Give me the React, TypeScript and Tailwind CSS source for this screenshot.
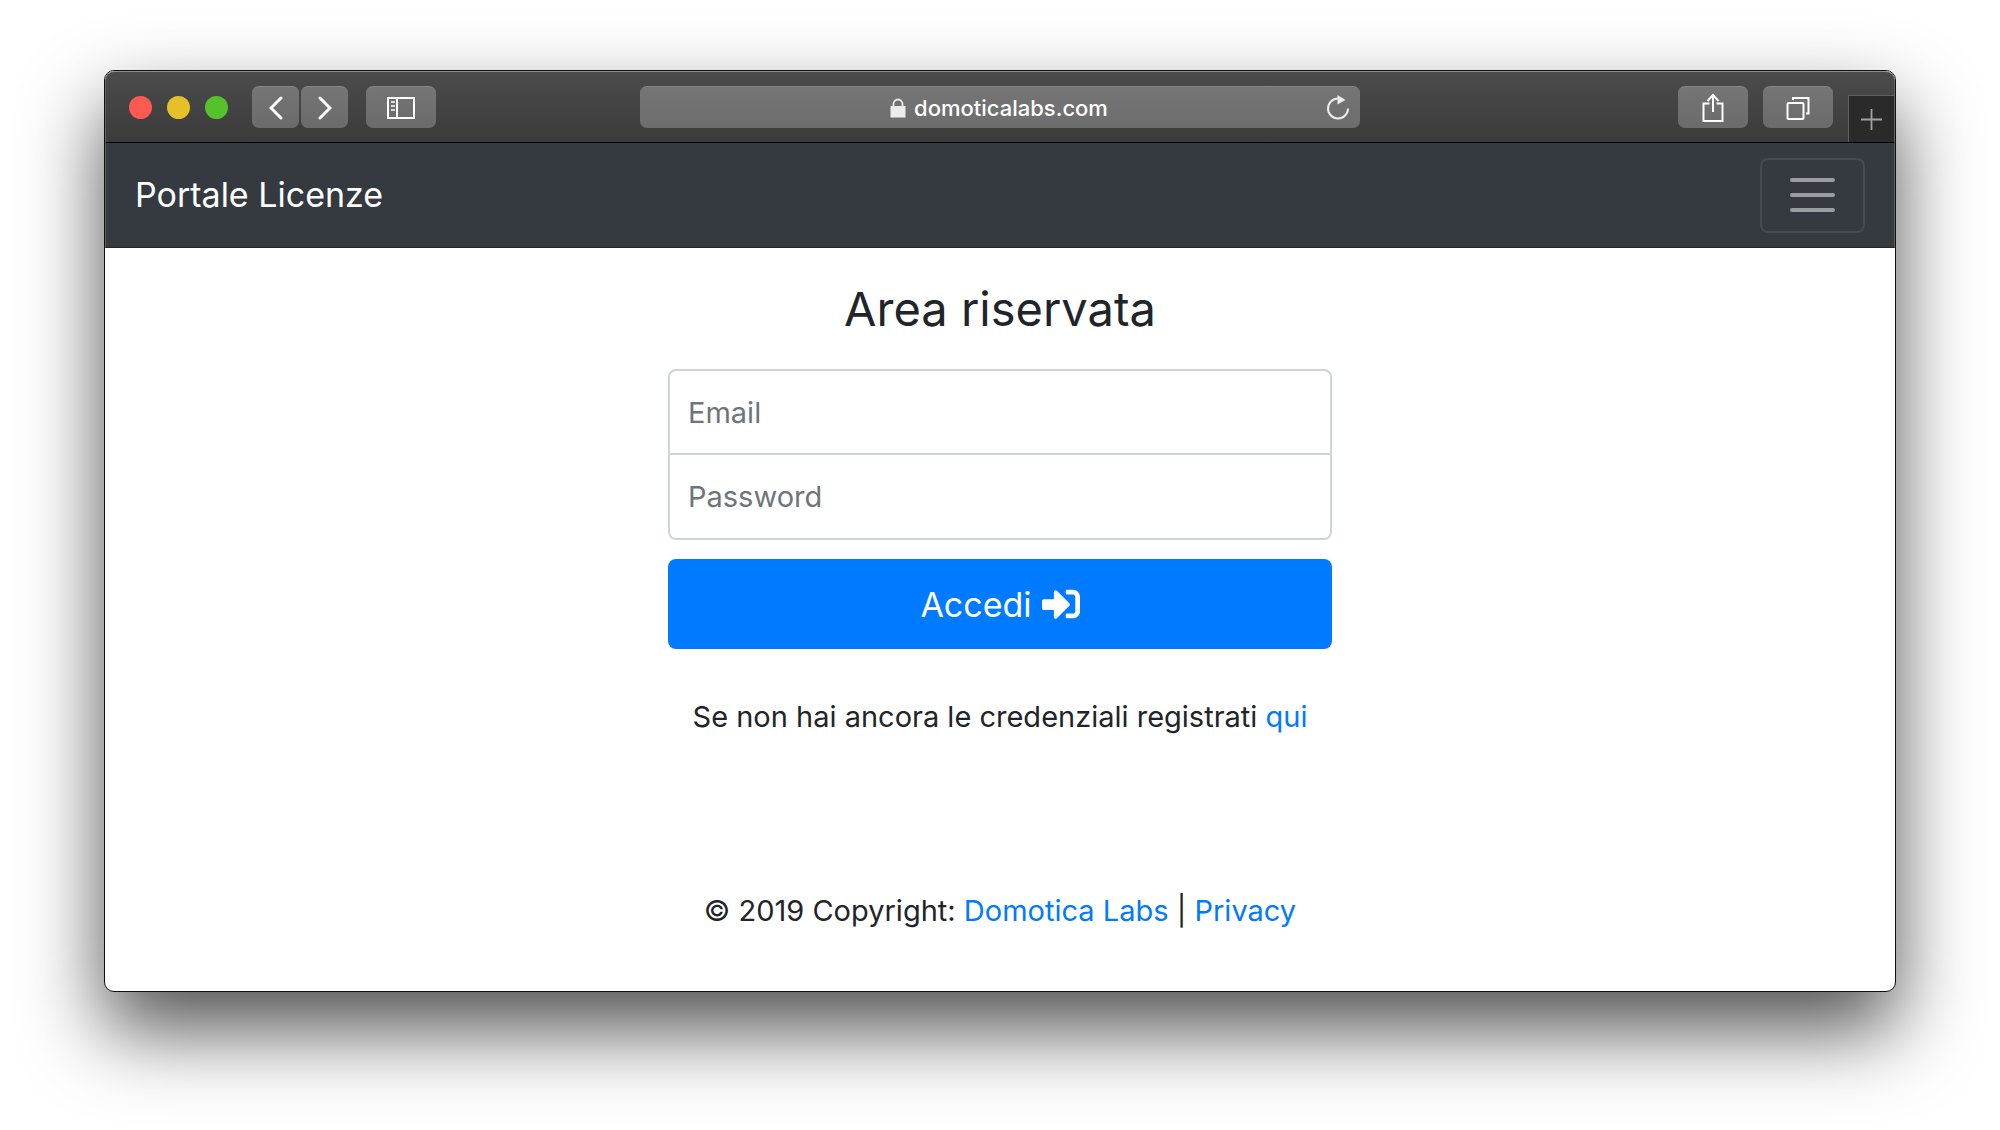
import { useState } from 'react';
import { FaSignInAlt } from 'react-icons/fa';

const toolButton =
  'flex h-[42px] items-center justify-center rounded-[7px] border-t border-[#868686] bg-linear-to-b from-[#757575] to-[#6b6b6b] text-white';

function BrowserBar() {
  return (
    <div className="flex h-[72px] rounded-t-[9px] border-x border-t border-b border-x-[#666] border-t-[#8c8c8c] border-b-black bg-linear-to-b from-[#4b4b4b] to-[#3b3b3b]">
      <div className="flex flex-1 items-center">
        <div className="ml-[23px] flex gap-[15px]">
          <span className="size-[23px] rounded-full bg-[#ff5a52]" />
          <span className="size-[23px] rounded-full bg-[#e6c029]" />
          <span className="size-[23px] rounded-full bg-[#53c22b]" />
        </div>
        <div className="ml-6 flex gap-[2px]">
          <button type="button" aria-label="Indietro" className={`${toolButton} w-[47px]`}>
            <svg width="14" height="24" viewBox="0 0 14 24" fill="none" stroke="currentColor" strokeWidth="3" strokeLinecap="round">
              <path d="M12 2L2 12l10 10" />
            </svg>
          </button>
          <button type="button" aria-label="Avanti" className={`${toolButton} w-[47px]`}>
            <svg width="14" height="24" viewBox="0 0 14 24" fill="none" stroke="currentColor" strokeWidth="3" strokeLinecap="round">
              <path d="M2 2l10 10L2 22" />
            </svg>
          </button>
        </div>
        <button type="button" aria-label="Barra laterale" className={`${toolButton} ml-[18px] w-[70px]`}>
          <svg width="30" height="24" viewBox="0 0 30 24" fill="none" stroke="currentColor">
            <rect x="2" y="2" width="26" height="20" strokeWidth="2" />
            <path d="M11 2v20" strokeWidth="2" />
            <path d="M5 6h4M5 10h4M5 14h4" strokeWidth="1.5" />
          </svg>
        </button>
      </div>

      <div className="my-auto flex h-[42px] w-[40.3%] items-center rounded-[7px] border-t border-[#868686] bg-linear-to-b from-[#757575] to-[#6d6d6d] px-[11px] text-white">
        <div className="flex flex-1 items-center justify-center gap-2 pl-5">
          <svg width="16" height="20" viewBox="0 0 16 20" fill="none">
            <path d="M3.5 9V6a4.5 4.5 0 0 1 9 0v3" stroke="#ececec" strokeWidth="1.8" />
            <rect x="0.5" y="8" width="15" height="11.5" rx="0.5" fill="#ececec" />
          </svg>
          <span className="text-[22px] leading-7 font-medium">domoticalabs.com</span>
        </div>
        <button type="button" aria-label="Ricarica" className="text-[#ececec]">
          <svg width="22" height="26" viewBox="0 0 22 26" fill="none">
            <path d="M21 13.5a10 10 0 1 1-10-10" stroke="currentColor" strokeWidth="2" />
            <path d="M10.5 0v9.5l8-4.5z" fill="currentColor" />
          </svg>
        </button>
      </div>

      <div className="flex flex-1 items-center justify-end">
        <button type="button" aria-label="Condividi" className={`${toolButton} w-[70px]`}>
          <svg width="22" height="30" viewBox="0 0 22 30" fill="none" stroke="currentColor" strokeWidth="2">
            <path d="M7.5 10.5H1.5v17.5h19V10.5h-6M11 2v17M5.5 8L11 2l5.5 6" />
          </svg>
        </button>
        <button type="button" aria-label="Pannelli" className={`${toolButton} mr-[15px] ml-[15px] w-[70px]`}>
          <svg width="24" height="24" viewBox="0 0 24 24" fill="none" stroke="currentColor" strokeWidth="2">
            <rect x="1.5" y="7" width="16" height="16" rx="1" />
            <path d="M7 4V2h15.5v15.5h-2.5" />
          </svg>
        </button>
        <button
          type="button"
          aria-label="Nuovo pannello"
          className="flex h-[47px] w-[46px] items-center justify-center self-end border-t border-l border-[#606060] bg-[#2a2a2a] text-[#a3a3a3]"
        >
          <svg width="21" height="21" viewBox="0 0 21 21" fill="none" stroke="currentColor" strokeWidth="1.8">
            <path d="M10.5 0v21M0 10.5h21" />
          </svg>
        </button>
      </div>
    </div>
  );
}

export default function App() {
  const [email, setEmail] = useState('');
  const [password, setPassword] = useState('');

  return (
    <div className="min-h-screen bg-white px-[104px] pt-[70px] pb-[138px] font-['Inter',sans-serif] text-[#212529]">
      <div className="overflow-hidden rounded-[10px] border border-[#111] bg-white shadow-[0_38px_80px_rgba(0,0,0,0.68)]">
        <BrowserBar />

        <nav className="flex h-[105px] items-center justify-between border-x border-b border-x-[#5c6166] border-b-[#22272b] bg-[#343a40] px-[29px]">
          <a href="#" className="text-[34px] leading-[42px] text-white">Portale Licenze</a>
          <button
            type="button"
            aria-label="Menu"
            className="flex h-[75px] w-[105px] flex-col items-center justify-center gap-[11px] rounded-lg border-2 border-[#464b51]"
          >
            <span className="h-1 w-[45px] rounded-full bg-[#9a9da0]" />
            <span className="h-1 w-[45px] rounded-full bg-[#9a9da0]" />
            <span className="h-1 w-[45px] rounded-full bg-[#9a9da0]" />
          </button>
        </nav>

        <main className="mx-auto w-[664px] pt-[30px] text-center">
          <h1 className="text-[47px] leading-[62px]">Area riservata</h1>
          <form className="mt-[29px]" onSubmit={(e) => e.preventDefault()}>
            <input
              type="email"
              aria-label="Email"
              placeholder="Email"
              value={email}
              onChange={(e) => setEmail(e.target.value)}
              className="block h-[86px] w-full rounded-t-lg border-2 border-[#ced4da] px-[18px] text-[29px] placeholder:text-[#6c757d]"
            />
            <input
              type="password"
              aria-label="Password"
              placeholder="Password"
              value={password}
              onChange={(e) => setPassword(e.target.value)}
              className="block h-[85px] w-full rounded-b-lg border-2 border-t-0 border-[#ced4da] px-[18px] text-[29px] placeholder:text-[#6c757d]"
            />
            <button
              type="submit"
              className="mt-[19px] flex h-[90px] w-full items-center justify-center gap-[10px] rounded-lg bg-[#007bff] text-[34px] text-white"
            >
              Accedi
              <FaSignInAlt className="size-[38px]" />
            </button>
          </form>
          <p className="mt-[45px] text-[29px] leading-[46px]">
            Se non hai ancora le credenziali registrati <a href="#" className="text-[#007bff]">qui</a>
          </p>
        </main>

        <footer className="pt-[148px] pb-[57px] text-center text-[29px] leading-[46px]">
          © 2019 Copyright: <a href="#" className="text-[#007bff]">Domotica Labs</a> |{' '}
          <a href="#" className="text-[#007bff]">Privacy</a>
        </footer>
      </div>
    </div>
  );
}
